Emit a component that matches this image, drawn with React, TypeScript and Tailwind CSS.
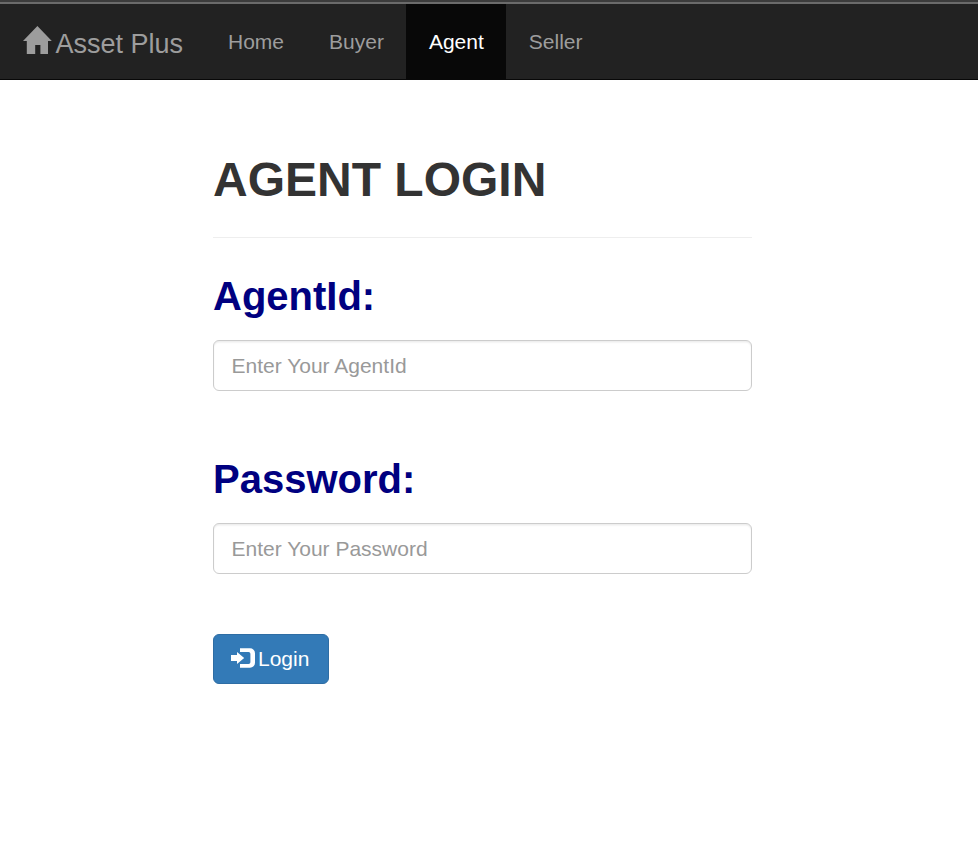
import React from "react";

const links = [
  { label: "Home", active: false },
  { label: "Buyer", active: false },
  { label: "Agent", active: true },
  { label: "Seller", active: false },
];

function HomeIcon() {
  return (
    <svg className="mt-[22px] ml-[23px] h-7 w-[29px] shrink-0" viewBox="0 0 29 28" fill="#9d9d9d">
      <path d="M14.4 0 28.8 15H25V28H17.4V19H12.2V28H3.8V15H0Z" />
    </svg>
  );
}

function LoginIcon() {
  return (
    <svg className="mb-[2px] h-5 w-6 shrink-0" viewBox="0 0 24 20" fill="#fff">
      <path d="M0 7.1h6V4l7.2 6L6 16v-3.1H0Z" />
      <path d="M9 .2H19a5 5 0 0 1 5 5v9.6a5 5 0 0 1-5 5H9v-3.8H17.6a1.8 1.8 0 0 0 1.8-1.8V5.8A1.8 1.8 0 0 0 17.6 4H9Z" />
    </svg>
  );
}

function Field({ id, label, placeholder, type }: { id: string; label: string; placeholder: string; type: string }) {
  return (
    <div className="flex flex-col">
      <label htmlFor={id} className="h-[68px] text-[40px] leading-[48px] font-bold text-[#000080]">{label}</label>
      <input
        id={id}
        type={type}
        placeholder={placeholder}
        className="h-[51px] w-full rounded-[6px] border border-[#ccc] bg-white px-[17.5px] text-[21px] leading-[30px] text-[#555] shadow-[inset_0_1.5px_1.5px_rgba(0,0,0,0.075)] outline-none placeholder:text-[#999]"
      />
    </div>
  );
}

export default function App() {
  return (
    <div className="min-h-[843px] bg-white font-['Liberation_Sans',Arial,sans-serif] text-[21px] text-[#333]">
      <div className="h-0.5 bg-[#3c3c3c]" />
      <div className="h-0.5 bg-[#6b6b6b]" />
      <nav className="flex h-[76px] border-b border-[#080808] bg-[#222] text-[#9d9d9d]">
        <a href="#" className="flex w-[205.5px] shrink-0">
          <HomeIcon />
          <span className="mt-[25px] ml-[3.5px] text-[27px] leading-[30px] whitespace-nowrap">Asset Plus</span>
        </a>
        {links.map((link) => (
          <a
            key={link.label}
            href="#"
            className={"h-[75px] px-[22.5px] pt-[23px] leading-[30px] " + (link.active ? "bg-[#080808] text-white" : "")}
          >
            {link.label}
          </a>
        ))}
      </nav>
      <main className="ml-[213px] flex w-[539px] flex-col">
        <h1 className="mt-[73px] border-b border-[#eee] pb-[30px] text-[48px] leading-[54px] font-bold">AGENT LOGIN</h1>
        <form className="mt-[34px] flex flex-col gap-16">
          <Field id="agent" label="AgentId:" placeholder="Enter Your AgentId" type="text" />
          <Field id="password" label="Password:" placeholder="Enter Your Password" type="password" />
          <button
            type="button"
            className="-mt-1 flex h-[50px] w-[116px] items-center rounded-[6px] border border-[#2e6da4] bg-[#337ab7] pl-[17px] text-white"
          >
            <LoginIcon />
            <span className="ml-[3px] leading-[30px]">Login</span>
          </button>
        </form>
      </main>
    </div>
  );
}
